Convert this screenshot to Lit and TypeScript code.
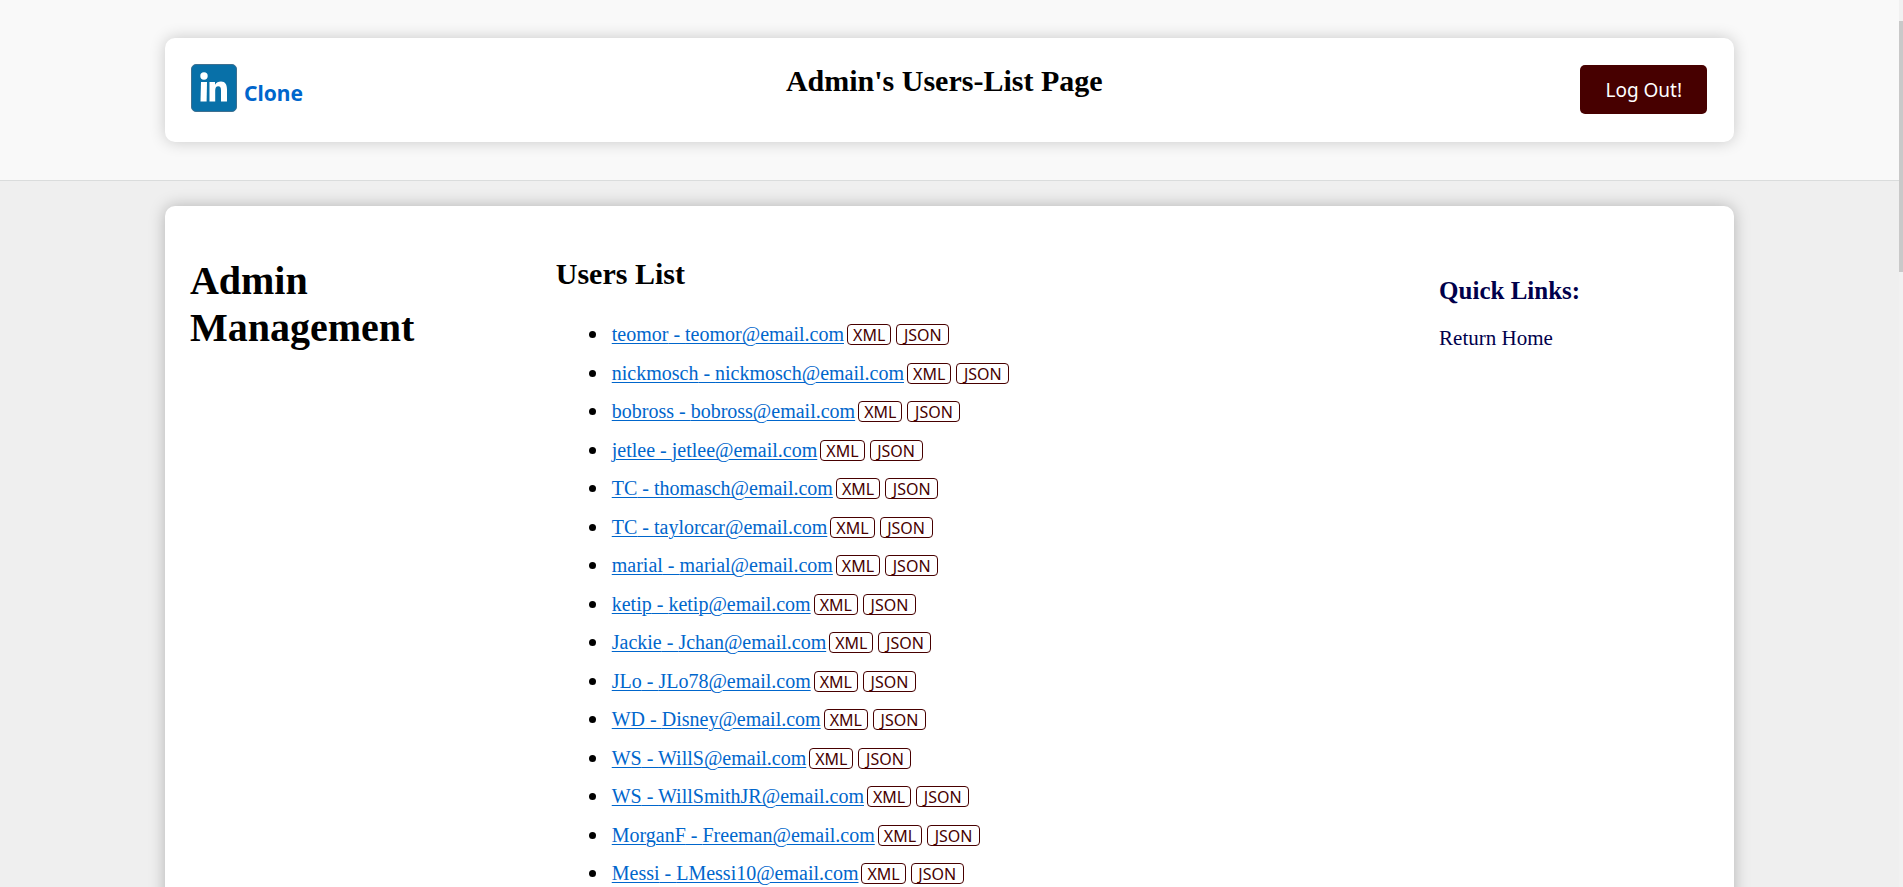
import { LitElement, html, css } from "lit";
import { customElement, property } from "lit/decorators.js";

interface User {
  name: string;
  email: string;
}

const USERS: User[] = [
  { name: "teomor", email: "teomor@email.com" },
  { name: "nickmosch", email: "nickmosch@email.com" },
  { name: "bobross", email: "bobross@email.com" },
  { name: "jetlee", email: "jetlee@email.com" },
  { name: "TC", email: "thomasch@email.com" },
  { name: "TC", email: "taylorcar@email.com" },
  { name: "marial", email: "marial@email.com" },
  { name: "ketip", email: "ketip@email.com" },
  { name: "Jackie", email: "Jchan@email.com" },
  { name: "JLo", email: "JLo78@email.com" },
  { name: "WD", email: "Disney@email.com" },
  { name: "WS", email: "WillS@email.com" },
  { name: "WS", email: "WillSmithJR@email.com" },
  { name: "MorganF", email: "Freeman@email.com" },
  { name: "Messi", email: "LMessi10@email.com" },
];

@customElement("site-header")
export class SiteHeader extends LitElement {
  static styles = css`
    :host {
      display: block;
      padding: 38px 0;
      background: #f9f9f9;
      border-bottom: 1px solid #dadcdc;
    }
    .card {
      box-sizing: content-box;
      width: 80%;
      min-height: 54px;
      margin: 0 auto;
      padding: 25px;
      display: flex;
      align-items: flex-start;
      justify-content: space-between;
      background: #fff;
      border-radius: 10px;
      box-shadow: 0 0 16px rgba(0, 0, 0, 0.2);
    }
    .brand {
      display: flex;
      align-items: flex-end;
      gap: 7px;
      padding: 1px 5px 0 1px;
      color: #0066cc;
      font: bold 21px/38px "Noto Sans", sans-serif;
      text-decoration: none;
    }
    .logo {
      display: block;
      width: 46px;
      height: 48px;
    }
    .title {
      margin: 0;
      padding-top: 1px;
      font-size: 30px;
      line-height: 34px;
    }
    .logout {
      margin: 2px 2px 0 0;
      padding: 11px 25px 9px;
      border: 0;
      border-radius: 5px;
      background: #470000;
      color: #fff;
      font: 19px/29px "Noto Sans", sans-serif;
      cursor: pointer;
    }
  `;

  render() {
    return html`
      <header class="card">
        <a class="brand" href="#">
          <svg class="logo" viewBox="0 0 46 48" aria-hidden="true">
            <rect x="0.5" y="0.5" width="45" height="47" rx="4.5" fill="#0870a8" stroke="#3f7090" />
            <circle cx="13" cy="12" r="3.7" fill="#fff" />
            <path d="M10 18h6l-.4 19.500H9.500z" fill="#fff" />
            <path
              d="M18.500 18h5.500v2.700c1.300-2 3.300-3.200 6-3.200 4.300 0 6 3 6 8v12h-6V26.500c0-2.800-.8-4.200-2.800-4.200-2 0-3 1.500-3 4.200v11h-5.700z"
              fill="#fff"
            />
          </svg>
          <span>Clone</span>
        </a>
        <h2 class="title">Admin's Users-List Page</h2>
        <button class="logout" type="button">Log Out!</button>
      </header>
    `;
  }
}

@customElement("user-list")
export class UserList extends LitElement {
  @property({ attribute: false }) users: User[] = [];

  static styles = css`
    .title {
      margin: 0;
      padding-top: 1px;
      font-size: 30px;
      line-height: 34px;
    }
    .list {
      margin: 24px 0 0;
      padding-left: 56px;
      list-style: none;
    }
    .row {
      height: 23px;
      padding: 8px 0 7px;
      line-height: 23px;
      white-space: nowrap;
    }
    .row:nth-child(odd) {
      padding-bottom: 8px;
    }
    .row::before {
      content: "";
      display: inline-block;
      width: 7px;
      height: 7px;
      margin: 0 16px 0 -23px;
      border-radius: 50%;
      background: #000;
      vertical-align: 3px;
    }
    .user {
      color: #0066cc;
      text-decoration-thickness: 1px;
      text-underline-offset: 2px;
    }
    .format {
      box-sizing: border-box;
      margin: 0 2px 0 3px;
      padding: 2px 5px 0;
      border: 1px solid #470000;
      border-radius: 4px;
      background: #fff;
      color: #470000;
      font: 16px/17px "Noto Sans", sans-serif;
      cursor: pointer;
    }
    .json {
      min-width: 53px;
    }
  `;

  render() {
    return html`
      <h2 class="title">Users List</h2>
      <ul class="list">
        ${this.users.map(
          (u) => html`<li class="row"><a class="user" href="#">${u.name} - ${u.email}</a><button class="format" type="button">XML</button><button class="format json" type="button">JSON</button></li>`
        )}
      </ul>
    `;
  }
}

@customElement("app-root")
export class AppRoot extends LitElement {
  static styles = css`
    :host {
      display: flex;
      height: 100vh;
      overflow: hidden;
      background: #efefef;
      color: #000;
      font: 20px "Liberation Serif", "Times New Roman", serif;
    }
    .page {
      flex: 1;
      min-width: 0;
      display: flex;
      flex-direction: column;
    }
    .card {
      box-sizing: content-box;
      flex: none;
      width: 80%;
      margin: 25px auto 0;
      padding: 50px 25px;
      display: grid;
      grid-template-columns: 20% 1fr 270px;
      column-gap: 62px;
      background: #fff;
      border-radius: 10px;
      box-shadow: 0 0 16px rgba(0, 0, 0, 0.25);
    }
    .heading {
      margin: 1px 0 0;
      font-size: 40px;
      line-height: 47px;
    }
    .links {
      padding-top: 21px;
      color: #00004b;
    }
    .links-title {
      margin: 0 0 21px;
      font-size: 25px;
      line-height: 28px;
    }
    .link {
      color: inherit;
      font-size: 21px;
      text-decoration: none;
    }
    .rail {
      flex: none;
      width: 4px;
      padding-top: 21px;
      box-sizing: border-box;
      background: #f1f1f1;
    }
    .thumb {
      height: 29%;
      background: #c9c9c9;
    }
  `;

  render() {
    return html`
      <div class="page">
        <site-header></site-header>
        <main class="card">
          <h1 class="heading">Admin Management</h1>
          <user-list .users=${USERS}></user-list>
          <nav class="links">
            <h3 class="links-title">Quick Links:</h3>
            <a class="link" href="#">Return Home</a>
          </nav>
        </main>
      </div>
      <div class="rail" aria-hidden="true"><div class="thumb"></div></div>
    `;
  }
}
